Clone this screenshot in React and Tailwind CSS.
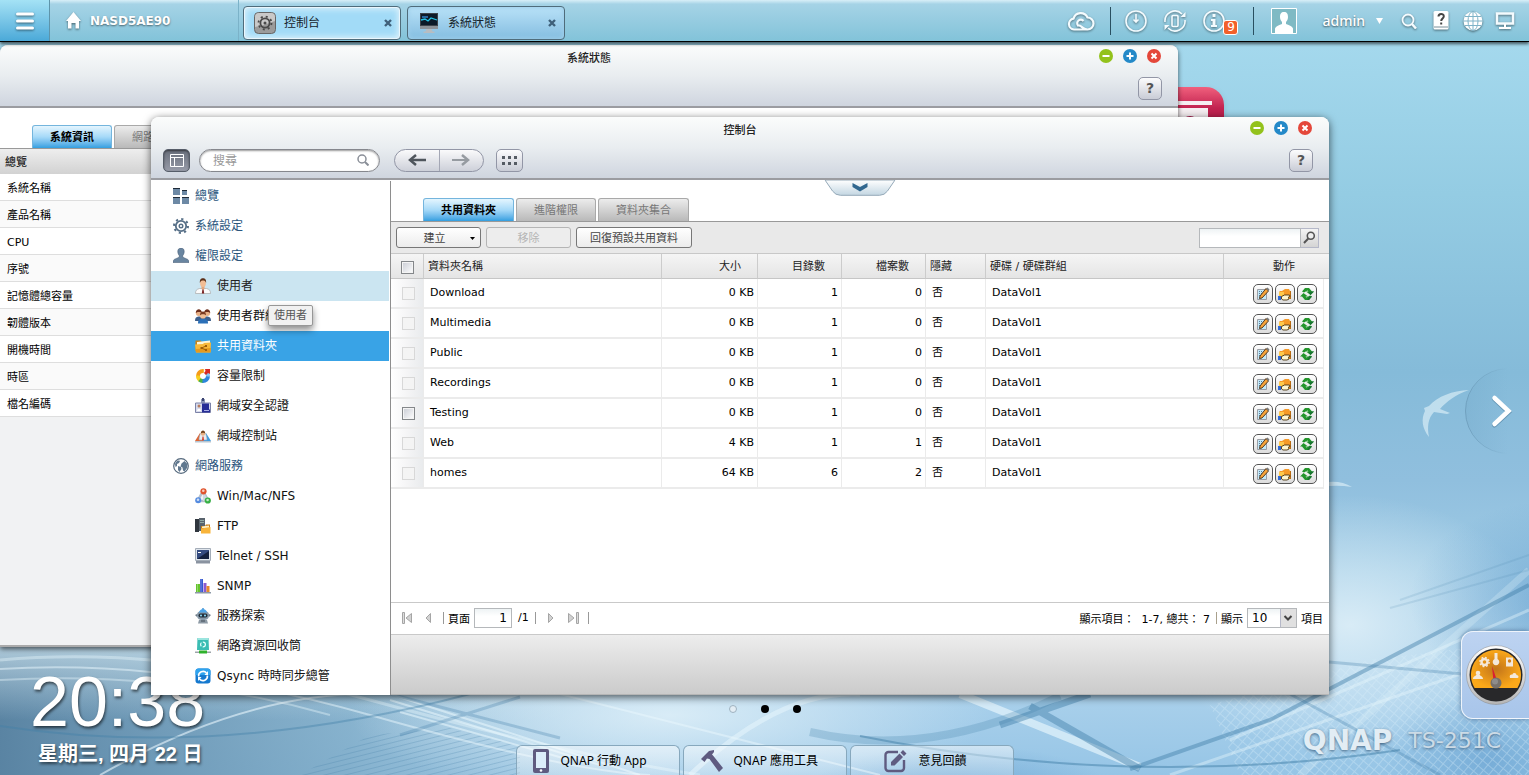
import React from "react";

const TOP_TABS = [
  { label: "控制台", icon: "gear", active: true },
  { label: "系統狀態", icon: "monitor", active: false },
];

const STATUS_ROWS = ["系統名稱", "產品名稱", "CPU", "序號", "記憶體總容量", "韌體版本", "開機時間", "時區", "檔名編碼"];

const NAV = [
  { label: "總覽", icon: "overview", group: true },
  { label: "系統設定", icon: "cog", group: true },
  { label: "權限設定", icon: "person", group: true },
  { label: "使用者", icon: "user", state: "hover" },
  { label: "使用者群組", icon: "users" },
  { label: "共用資料夾", icon: "folder", state: "active" },
  { label: "容量限制", icon: "quota" },
  { label: "網域安全認證", icon: "badge" },
  { label: "網域控制站", icon: "domain" },
  { label: "網路服務", icon: "globe", group: true },
  { label: "Win/Mac/NFS", icon: "share" },
  { label: "FTP", icon: "ftp" },
  { label: "Telnet / SSH", icon: "terminal" },
  { label: "SNMP", icon: "bars" },
  { label: "服務探索", icon: "robot" },
  { label: "網路資源回收筒", icon: "recycle" },
  { label: "Qsync 時時同步總管", icon: "sync" },
];

const FOLDERS = [
  ["Download", "0 KB", 1, 0],
  ["Multimedia", "0 KB", 1, 0],
  ["Public", "0 KB", 1, 0],
  ["Recordings", "0 KB", 1, 0],
  ["Testing", "0 KB", 1, 0],
  ["Web", "4 KB", 1, 1],
  ["homes", "64 KB", 6, 2],
];

const NAV_DRAWINGS = {
  overview: (
    <g fill="#6d89a5">
      <path d="M0 0h7v7H0zM9 2h5v5H9zM0 9h7v7H0zM9 9h7v7H9z" />
      <path fill="#1e2a38" d="M0 0h7v1H0zM9 2h5v1H9zM0 9h7v1H0zM9 9h7v1H9z" />
    </g>
  ),
  cog: (
    <g fill="none" stroke="#566f87">
      <circle cx="8" cy="8" r="5.2" strokeWidth="1.8" />
      <circle cx="8" cy="8" r="1.800" strokeWidth="1.400" />
      <circle cx="8" cy="8" r="7" strokeWidth="2" strokeDasharray="2.2 3.3" />
    </g>
  ),
  person: (
    <path d="M8 0c2.400 0 3.400 1.800 3.200 4-.1 1.600-.7 2.700-1.400 3.500v1.700l4.500 2c1.200.5 1.700 1.500 1.700 3.300H0c0-1.800.5-2.800 1.700-3.300l4.500-2V7.500C5.500 6.700 4.900 5.600 4.800 4 4.600 1.800 5.600 0 8 0z" fill="#6985a0" stroke="#3c536c" strokeWidth=".5" />
  ),
  user: (
    <g>
      <path d="M.5 15.500c0-3 1-4.200 4-5h7c3 .8 4 2 4 5z" fill="#fbfbfb" stroke="#a9a9a9" strokeWidth=".7" />
      <path d="M6.500 8h3v3L8 12l-1.500-1z" fill="#e5a67a" />
      <ellipse cx="8" cy="5" rx="2.900" ry="4" fill="#f2bd94" />
      <path d="M4.900 5C4.600 1.500 6 .3 8 .3S11.400 1.500 11.100 5C10.500 3 9.500 2.600 8 2.600S5.500 3 4.900 5z" fill="#5b2f17" />
      <path d="M7.400 11.500h1.200l.6 4H6.800z" fill="#7a2424" />
    </g>
  ),
  users: (
    <g>
      <path d="M0 13c0-3 1-4 3.500-4.500h9C15 9 16 10 16 13z" fill="#3d5f8c" />
      <circle cx="3.800" cy="5" r="3" fill="#e8b086" />
      <circle cx="12.200" cy="5" r="3" fill="#e8b086" />
      <path d="M.8 5c0-5 6-5 6 0-1-1.500-5-1.500-6 0zM9.200 5c0-5 6-5 6 0-1-1.500-5-1.500-6 0z" fill="#6d2f1c" />
      <path d="M3 15.500c0-3.500 1-4.500 5-4.500s5 1 5 4.500z" fill="#2b70b8" />
      <circle cx="8" cy="7.500" r="3.100" fill="#f0be95" />
      <path d="M4.900 7.500c0-5.200 6.200-5.200 6.200 0-1-1.700-5.200-1.700-6.200 0z" fill="#7b3a20" />
    </g>
  ),
  folder: (
    <g>
      <path d="M.5 4V2.500h5L7 4h8v9H.5z" fill="#c98415" />
      <path d="M2 4l13-1.500v4L2 8z" fill="#fff6d8" />
      <path d="M0 6.500l8-.5 1-1 7-.5-.5 10H1z" fill="#f8b93a" />
      <path d="M1 14.500L.6 11 16 10l-.5 4.500z" fill="#e69a1e" />
      <path d="M11 8l-4.500 2 4.500 2" stroke="#a05e08" fill="none" />
      <path d="M10 7h2v2h-2zM5.500 9h2v2h-2zM10 11h2v2h-2z" fill="#a05e08" />
    </g>
  ),
  quota: (
    <g fill="none" strokeWidth="4">
      <path d="M8 3a5 5 0 0 0-5 5" stroke="#f59b1a" />
      <path d="M3 7.500A5 5 0 0 0 5 12" stroke="#f7cf20" />
      <path d="M4.500 11.800A5 5 0 0 0 8 13" stroke="#49b244" />
      <path d="M7.500 13A5 5 0 0 0 13 8" stroke="#2d86dc" />
      <path d="M13 8.500A5 5 0 0 0 11 4" stroke="#88c7f3" />
      <path d="M8 3l1 .1" stroke="#f4b22f" />
      <path d="M10 1h5v5l-2-1-2 2-2-2 1.500-2z" fill="#d72a25" stroke="none" />
    </g>
  ),
  badge: (
    <g>
      <path d="M6 1h4v5H6z" fill="#8c95b8" />
      <path d="M7 0h2v3H7z" fill="#3b4470" />
      <path d="M.5 5h15v9.500H.5z" fill="#d6daec" stroke="#7c83a8" />
      <path d="M7 5.500h7v6h1v3H7z" fill="#272d96" />
      <circle cx="4" cy="8" r="1.500" fill="#b67c5d" />
      <path d="M2 13c0-3 4-3 4 0z" fill="#fff" />
      <path d="M9 12h5v1H9z" fill="#a9aee8" />
    </g>
  ),
  domain: (
    <g>
      <path d="M0 13l5-8 3 8z" fill="#df6533" />
      <path d="M8 13l3-8 5 8z" fill="#3d9be0" />
      <path d="M4 12c0-4 1.500-8 4-8s4 4 4 8z" fill="#e7ecf1" stroke="#8fa4b8" strokeWidth=".6" />
      <circle cx="8" cy="5.500" r="2.200" fill="#e9b184" />
      <path d="M5.800 5.500c0-4 4.400-4 4.400 0-1-1-3.400-1-4.400 0z" fill="#70421c" />
      <path d="M7.500 8.500h1l.5 4H7z" fill="#d33a23" />
      <path d="M0 13h16v1.500H0z" fill="#b7c5d1" />
    </g>
  ),
  globe: (
    <g>
      <circle cx="8" cy="8" r="7.300" fill="#fff" stroke="#55697d" strokeWidth="1.200" />
      <path d="M3 4c2-2 4-1.500 4-1l-1 2-2 1v2L2.500 9 2 6zM8.500 5.500l3-2.500 3 3-.5 4-2.500 3.500-1.500-1-.5-3-2-1zM5 8l3 1 .5 2-2 3-1.500-2z" fill="#60788f" />
    </g>
  ),
  share: (
    <g>
      <path d="M8 3L2.500 13h11z" fill="#eef2f5" stroke="#b5c0cc" strokeWidth="2.500" />
      <path d="M8 3l5.500 10H8z" fill="#cfd8e0" />
      <circle cx="8.500" cy="3.300" r="3.100" fill="#e0532c" />
      <circle cx="3.200" cy="12.300" r="3" fill="#548be0" />
      <circle cx="12.800" cy="12.500" r="3.100" fill="#37b045" />
      <circle cx="8.300" cy="2.800" r="1.300" fill="#fff" fillOpacity=".7" />
      <circle cx="3" cy="11.800" r="1.300" fill="#fff" fillOpacity=".7" />
      <circle cx="12.600" cy="12" r="1.300" fill="#fff" fillOpacity=".7" />
    </g>
  ),
  ftp: (
    <g>
      <path d="M0 1h4v13H0z" fill="#30363e" />
      <path d="M4 0h6v13H4z" fill="#59636d" />
      <path d="M5 2h4v1H5zM5 4h4v1H5z" fill="#8fa8a0" />
      <path d="M6 8h4l1-1.500h4V15H6z" fill="#cb7f15" />
      <path d="M7 8.500l7-1V10H7z" fill="#fff0c4" />
      <path d="M6 10.500L15.500 9v6.500H6z" fill="#f8b43a" />
    </g>
  ),
  terminal: (
    <g>
      <path d="M.5.5h15v12H.5z" fill="#dfe5ec" stroke="#a4adb8" />
      <path d="M2 2h12v9H2z" fill="#14213f" />
      <path d="M2 11l12-8v-1H2z" fill="#344b80" />
      <path d="M3 4h3v1H3z" fill="#fff" />
      <path d="M1 13h14v2.500H1z" fill="#8a93a0" />
    </g>
  ),
  bars: (
    <g>
      <path d="M1 6h4v8H1z" fill="#65c52c" />
      <path d="M5 1h3v13H5z" fill="#3557d1" />
      <path d="M8.500 5h3v9h-3z" fill="#8b5bcf" />
      <path d="M11.500 8h3v6h-3z" fill="#e68a2a" />
      <path d="M0 14h16v1.500H0z" fill="#8d99a6" />
      <path d="M2 6h1v8H2zM5.500 1h1v13h-1z" fill="#fff" fillOpacity=".3" />
    </g>
  ),
  robot: (
    <g>
      <path d="M7.300 0h1.400v3H7.300z" fill="#3a8ed2" />
      <path d="M2 7c0-6 12-6 12 0 0 4-2 5-6 5S2 11 2 7z" fill="#8798a7" />
      <path d="M4 4.500c.5-2 2-3.500 4-3.500s3.500 1.500 4 3.500z" fill="#4ca4e7" />
      <rect x="3.500" y="5.500" width="9" height="4" rx="2" fill="#22303d" />
      <circle cx="6" cy="7.500" r="1" fill="#8de0ff" />
      <circle cx="10" cy="7.500" r="1" fill="#8de0ff" />
      <path d="M0 7l2-1v3zM16 7l-2-1v3z" fill="#6a7986" />
      <path d="M4 12h8l1 3.500H3z" fill="#8d9aa5" />
      <path d="M6 12.500h4v1H6z" fill="#3f4b56" />
    </g>
  ),
  recycle: (
    <g>
      <path d="M2.500 0h11l.5 12H2z" fill="#3bbdb3" />
      <path d="M3 0h10v2H3z" fill="#9be5df" />
      <circle cx="8" cy="6.500" r="2.400" fill="none" stroke="#e9fffc" strokeWidth="1.200" strokeDasharray="3.700 1.300" />
      <path d="M0 13.500h16v1.500H0z" fill="#9da5aa" />
      <path d="M4 12.500h8v3H4z" fill="#2fb12c" />
    </g>
  ),
  sync: (
    <g>
      <rect x=".5" y=".5" width="15" height="15" rx="3" fill="#1579cf" />
      <path d="M.5 3.500a3 3 0 0 1 3-3h9a3 3 0 0 1 3 3V7H.5z" fill="#2fa3ee" />
      <path d="M3.600 8.500A4.500 4.500 0 0 1 11.500 5M12.400 7.500A4.500 4.500 0 0 1 4.500 11" fill="none" stroke="#fff" strokeWidth="1.600" />
      <path d="M13 3v4H9.500zM3 13V9h3.500z" fill="#fff" />
    </g>
  ),
};

function NavIcon({ name }) {
  return (
    <svg aria-hidden="true" className="h-4 w-4 shrink-0" viewBox="0 0 16 16">
      {NAV_DRAWINGS[name]}
    </svg>
  );
}

function Wallpaper() {
  return (
    <svg aria-hidden="true" className="absolute inset-0 h-full w-full" viewBox="0 0 1529 775" preserveAspectRatio="none">
      <defs>
        <linearGradient id="sky" x1="0" y1="0" x2="0" y2="1">
          <stop offset="0" stopColor="#a9dcf0" />
          <stop offset=".25" stopColor="#94cce3" />
          <stop offset=".48" stopColor="#85bbd9" />
          <stop offset=".62" stopColor="#90bfde" />
          <stop offset=".74" stopColor="#9fcbe5" />
          <stop offset=".9" stopColor="#a9d0eb" />
          <stop offset="1" stopColor="#96c5e6" />
        </linearGradient>
        <linearGradient id="leftShade" x1="0" y1="0" x2="1" y2="0">
          <stop offset="0" stopColor="#56809f" stopOpacity=".95" />
          <stop offset=".5" stopColor="#7ba7c2" stopOpacity=".7" />
          <stop offset="1" stopColor="#c0dcec" stopOpacity="0" />
        </linearGradient>
        <linearGradient id="leftLight" x1="0" y1="0" x2="0" y2="1">
          <stop offset="0" stopColor="#c6dde9" stopOpacity=".95" />
          <stop offset="1" stopColor="#c6dde9" stopOpacity="0" />
        </linearGradient>
        <radialGradient id="glow">
          <stop offset="0" stopColor="#deeff8" stopOpacity=".9" />
          <stop offset="1" stopColor="#deeff8" stopOpacity="0" />
        </radialGradient>
        <radialGradient id="deep">
          <stop offset="0" stopColor="#5593c8" stopOpacity=".5" />
          <stop offset="1" stopColor="#5593c8" stopOpacity="0" />
        </radialGradient>
        <pattern id="mesh" width="7" height="7" patternUnits="userSpaceOnUse" patternTransform="rotate(40)">
          <path d="M0 0H7M0 0V7" stroke="#dcf0fa" strokeWidth="2" />
        </pattern>
        <pattern id="fine" width="5" height="5" patternUnits="userSpaceOnUse" patternTransform="rotate(-14)">
          <path d="M0 0H5" stroke="#417ca5" strokeWidth="2" />
        </pattern>
      </defs>
      <rect width="1529" height="775" fill="url(#sky)" />
      <rect y="630" width="700" height="145" fill="url(#leftShade)" />
      <rect y="630" width="560" height="90" fill="url(#leftLight)" />
      <ellipse cx="670" cy="715" rx="320" ry="85" fill="url(#glow)" />
      <ellipse cx="1350" cy="625" rx="190" ry="130" fill="url(#glow)" />
      <ellipse cx="1560" cy="600" rx="150" ry="100" fill="url(#deep)" />
      <ellipse cx="960" cy="790" rx="150" ry="45" fill="url(#deep)" />
      <ellipse cx="1490" cy="760" rx="110" ry="70" fill="url(#deep)" />
      <path d="M300 775L370 735 450 728 520 746 520 775z" fill="url(#fine)" opacity=".25" />
      <path d="M1210 705L1370 660 1529 640V775H1240z" fill="url(#mesh)" opacity=".33" />
      <g fill="none" stroke="#e9f7fd">
        <path d="M0 660Q170 645 370 700T700 775" strokeWidth="3" opacity=".4" />
        <path d="M0 669Q170 658 370 715T650 775" strokeWidth="2" opacity=".5" />
        <path d="M0 680Q170 670 330 715" strokeWidth="2" opacity=".4" />
        <path d="M100 775Q250 690 380 694" strokeWidth="2" opacity=".6" />
        <path d="M390 694L640 775M390 700L600 765M400 712L570 760" strokeWidth="2" opacity=".55" />
        <path d="M560 694L880 775" strokeWidth="2" opacity=".5" />
        <path d="M690 775Q780 690 860 694" strokeWidth="5" opacity=".5" />
        <path d="M960 694L1140 767" strokeWidth="8" opacity=".65" />
        <path d="M1170 775L1529 650M1130 694L1240 620M1529 610L1230 740" strokeWidth="3" opacity=".4" />
        <path d="M1300 775L1529 570" strokeWidth="7" opacity=".25" />
      </g>
      <g fill="none" stroke="#417fa8">
        <path d="M0 726Q220 760 470 694" strokeWidth="2" opacity=".4" />
        <path d="M390 694L560 738M400 735L520 697" strokeWidth="3" opacity=".3" />
        <path d="M810 732Q930 760 1060 696" strokeWidth="8" opacity=".25" />
        <path d="M1000 725L1090 694M1030 706L1140 769" strokeWidth="7" opacity=".45" />
        <path d="M860 736Q1130 790 1400 750" strokeWidth="2" opacity=".5" />
        <path d="M1130 769L1270 720 1529 585" strokeWidth="4" opacity=".45" />
        <path d="M1290 694L1440 775M1329 662L1529 680" strokeWidth="3" opacity=".3" />
        <path d="M1400 600L1529 555M1390 608L1529 570" strokeWidth="2" opacity=".15" />
      </g>
      <g fill="#e5f5fb" opacity=".6">
        <path d="M1469 390C1452 391 1438 396 1429 406L1424 408 1425 411C1421 419 1422 428 1429 437C1427 427 1428 418 1434 412L1447 414 1450 413 1440 409C1446 402 1456 394 1469 390z" />
        <path d="M1329 482Q1342 481 1352 487Q1340 485 1329 486z" />
      </g>
    </svg>
  );
}

function WindowControls() {
  return (
    <div className="flex items-start justify-end gap-2.5 pt-1 pr-[17px]">
      {[
        ["最小化", "#93c21c", "M3.500 7h7"],
        ["最大化", "#2489c8", "M3.500 7h7M7 3.500v7"],
        ["關閉", "#e4473a", "M4.500 4.500l5 5M9.500 4.500l-5 5"],
      ].map(([label, color, d]) => (
        <button key={label} type="button" aria-label={label}>
          <svg className="h-3.5 w-3.5" viewBox="0 0 14 14">
            <circle cx="7" cy="7" r="7" fill={color} />
            <path d={d} stroke="#fff" strokeWidth="2" />
          </svg>
        </button>
      ))}
    </div>
  );
}

function WindowHeader({ title, children }) {
  return (
    <header className="flex h-[63px] shrink-0 flex-col rounded-t-lg border-b-2 border-[#9b9ca1] bg-linear-to-b from-[#fbfcfc] via-[#e9edf0] to-[#cfd5df]">
      <div className="grid h-6 shrink-0 grid-cols-[1fr_auto_1fr]">
        <span />
        <h2 className="pt-0.5 text-[11px] leading-6 font-medium text-[#222]">{title}</h2>
        <WindowControls />
      </div>
      <div className="flex h-[38px] shrink-0 items-center pr-4 pl-3">
        {children}
        <button type="button" aria-label="說明" className="ml-auto h-[23px] w-6 rounded-[5px] border border-[#9296a6] bg-linear-to-b from-[#fcfcfd] to-[#c9ccd6] text-[14px] leading-5 font-bold text-[#555]">?</button>
      </div>
    </header>
  );
}

function Tab({ active, children }) {
  return (
    <button
      type="button"
      className={
        active
          ? "h-[23px] rounded-t-[3px] border border-b-0 border-[#74b5dd] bg-linear-to-b from-[#e4f5fe] via-[#a5d9f8] to-[#319fe0] px-[17px] pt-0.5 text-[11px] font-bold text-black"
          : "h-[23px] rounded-t-[3px] border border-b-0 border-[#a9a9a9] bg-linear-to-b from-[#ececec] to-[#b9b9b9] px-[17px] pt-0.5 text-[11px] text-[#777]"
      }
    >
      {children}
    </button>
  );
}

function StatusWindow() {
  return (
    <section className="absolute top-[45px] right-[351px] bottom-[128px] left-0 flex flex-col rounded-t-lg border-b-2 border-[#aaa] bg-[#f1f2f3] shadow-[0_2px_5px_rgba(0,0,0,0.6)]">
      <WindowHeader title="系統狀態" />
      <div className="flex h-[41px] shrink-0 items-end gap-0.5 border-b border-[#999] bg-white pl-8">
        <Tab active>系統資訊</Tab>
        <Tab>網路狀態</Tab>
      </div>
      <h3 className="h-[25px] shrink-0 bg-linear-to-b from-[#eee] to-[#d2d2d2] pt-0.5 pl-[5px] text-[11px] leading-6 font-medium text-[#222]">總覽</h3>
      <ul>
        {STATUS_ROWS.map((row, i) => (
          <li key={row} className={`h-[27px] border-b border-[#dedede] pt-0.5 pl-[7px] text-[11px] leading-[26px] text-black ${i % 2 ? "bg-[#fafafa]" : "bg-white"}`}>
            {row}
          </li>
        ))}
      </ul>
    </section>
  );
}

function ControlToolbar() {
  return (
    <>
      <button type="button" aria-label="側邊欄" className="flex h-[23px] w-[27px] items-center justify-center rounded-[5px] border border-[#565d69] bg-linear-to-b from-[#696f7b] to-[#979ba8] shadow-[inset_0_1px_2px_rgba(0,0,0,0.5)]">
        <svg className="h-[13px] w-3.5" viewBox="0 0 14 13">
          <path d="M.5.5h13v12H.5zM0 3.500h14M4.500 3v10" fill="none" stroke="#fff" />
        </svg>
      </button>
      <label className="ml-[9px] flex h-[23px] w-[181px] items-center rounded-full border border-[#85878d] bg-white pr-2.5 pl-[13px] shadow-[inset_0_1px_2px_rgba(0,0,0,0.4)]">
        <input type="text" aria-label="搜尋" placeholder="搜尋" className="min-w-0 flex-1 bg-transparent pt-0.5 text-[12px] text-black outline-none placeholder:text-[#999]" />
        <svg aria-hidden="true" className="h-3 w-3" viewBox="0 0 12 12">
          <circle cx="5" cy="5" r="4" fill="none" stroke="#8a8f98" strokeWidth="1.500" />
          <path d="M8 8l3.500 3.500" stroke="#8a8f98" strokeWidth="2" />
        </svg>
      </label>
      <div className="ml-3.5 flex h-[23px] w-[90px] rounded-full border border-[#9296a6] bg-linear-to-b from-[#fafafb] to-[#cdd0d9]">
        <button type="button" aria-label="上一頁" className="flex flex-1 items-center justify-center border-r border-[#a4a7b5]">
          <svg className="h-3 w-[18px]" viewBox="0 0 18 12"><path d="M18 6H3" stroke="#4f555c" strokeWidth="2.500" /><path d="M8 1L2 6l6 5" fill="none" stroke="#4f555c" strokeWidth="2.500" /></svg>
        </button>
        <button type="button" aria-label="下一頁" className="flex flex-1 items-center justify-center">
          <svg className="h-3 w-[18px]" viewBox="0 0 18 12"><path d="M0 6h15" stroke="#969ba1" strokeWidth="2" /><path d="M10 1l6 5-6 5" fill="none" stroke="#969ba1" strokeWidth="2.500" /></svg>
        </button>
      </div>
      <button type="button" aria-label="所有項目" className="ml-3 flex h-[23px] w-[27px] items-center justify-center rounded-[5px] border border-[#9296a6] bg-linear-to-b from-[#fcfcfd] to-[#c9ccd6]">
        <svg className="h-[9px] w-[15px]" viewBox="0 0 15 9"><path d="M0 0h3v3H0zM6 0h3v3H6zM12 0h3v3h-3zM0 6h3v3H0zM6 6h3v3H6zM12 6h3v3h-3z" fill="#555b63" /></svg>
      </button>
    </>
  );
}

function Sidebar() {
  return (
    <nav className="relative w-60 shrink-0 border-r border-[#8e8e8e] bg-white pr-px">
      {NAV.map((item) => (
        <a
          key={item.label}
          href="#"
          className={`flex h-[30px] items-center gap-1.5 text-[12px] whitespace-nowrap ${item.group ? "pl-[22px] text-[#2a557c]" : "pl-11"} ${
            item.state === "active" ? "bg-[#39a3e6] text-white" : item.state === "hover" ? "bg-[#cbe5f1] text-[#222]" : item.group ? "" : "text-[#111]"
          }`}
        >
          <NavIcon name={item.icon} />
          {item.label}
        </a>
      ))}
      <span role="tooltip" className="absolute top-[124px] left-[117px] rounded-xs border border-[#979797] bg-[#f1f1f1] px-[5px] pt-px text-[11px] leading-[18px] text-[#555] shadow-[0_4px_7px_rgba(0,0,0,0.45)]">
        使用者
      </span>
    </nav>
  );
}

const CHECK = "block h-[13px] w-[13px] appearance-none border border-[#84878a] bg-linear-to-br from-[#c9ccd4] to-white shadow-[inset_0_0_0_1px_#f4f4f4] disabled:border-[#d8d8d8] disabled:from-[#f4f4f4] disabled:to-[#f4f4f4]";

const ACTION_BTN = "flex h-5 w-5 items-center justify-center rounded-[5px] border border-[#555] bg-linear-to-b from-white to-[#dcdcdc]";

function FolderActions({ name }) {
  return (
    <div className="flex justify-end gap-0.5 pr-1.5">
      <button type="button" aria-label={`編輯 ${name}`} className={ACTION_BTN}>
        <svg className="h-3.5 w-3.5" viewBox="0 0 14 14">
          <path d="M1.500 2.500h9v10h-9z" fill="#c4e9f8" stroke="#9b9fa6" />
          <path d="M3 4.500h4M3 6.500h3M3 8.500h2" stroke="#5b7f9d" strokeDasharray="1 1" />
          <path d="M10 1.500L12.500 4 6 11 3.500 11.500 4 9z" fill="#f7a43a" stroke="#3f2a16" strokeWidth=".9" />
          <path d="M10 1.500l1.500-1 2 2-1 1.500z" fill="#777" />
        </svg>
      </button>
      <button type="button" aria-label={`權限 ${name}`} className={ACTION_BTN}>
        <svg className="h-3.5 w-3.5" viewBox="0 0 14 14">
          <path d="M1 5l1-1h2l3-2h4l1 2h1v8H1z" fill="#f79a28" />
          <path d="M1 5h5v3l-2 1H1z" fill="#ffc94b" />
          <path d="M12.500 4v8" fill="none" stroke="#b96d16" />
          <path d="M3.500 9.500l3-1.500h5l.5 1.500-1.500.5.5 2-2 1H5l-1.500-1z" fill="#fff5cf" stroke="#4b3612" strokeWidth=".9" />
          <path d="M0 9h3v4H0z" fill="#3169d4" />
        </svg>
      </button>
      <button type="button" aria-label={`重新整理 ${name}`} className={ACTION_BTN}>
        <svg className="h-3.5 w-3.5" viewBox="0 0 14 14">
          <path d="M2 4.500L5 1h4l3 3.500h2L10.500 8 6 4.500h2.500L7.500 3.500 4 5.500z" fill="#23952c" />
          <path d="M12 9.500L9 13H5L2 9.500H0L3.500 6 8 9.500H5.500l1 1L10 8.500z" fill="#23952c" />
          <path d="M12 4.500h2L10.500 8 8 5zM12 9.500L9 13H7l2.500-4z" fill="#1a7432" />
        </svg>
      </button>
    </div>
  );
}

const TH = "border-r border-[#ccc] font-normal text-[#222] ";
const TD = "border-r border-[#ebebeb] text-black ";

function FolderTable() {
  return (
    <table className="w-full table-fixed border-separate border-spacing-0 text-[11px]">
      <colgroup>
        <col className="w-[33px]" />
        <col />
        <col className="w-24" />
        <col className="w-[84px]" />
        <col className="w-[84px]" />
        <col className="w-[60px]" />
        <col className="w-[238px]" />
        <col className="w-[100px]" />
        <col className="w-[5px]" />
      </colgroup>
      <thead>
        <tr className="h-[25px] bg-linear-to-b from-[#f5f5f5] to-[#e4e4e4] [&>th]:border-b [&>th]:border-b-[#c6c6c6] [&>th]:pt-[3px]">
          <th className={TH + "pl-2.5"}><input type="checkbox" aria-label="全選" className={CHECK} /></th>
          <th className={TH + "pl-1 text-left"}>資料夾名稱</th>
          <th className={TH + "pr-4 text-right"}>大小</th>
          <th className={TH + "pr-4 text-right"}>目錄數</th>
          <th className={TH + "pr-4 text-right"}>檔案數</th>
          <th className={TH + "pl-1 text-left"}>隱藏</th>
          <th className={TH + "pl-1 text-left"}>硬碟 / 硬碟群組</th>
          <th className="pl-5 font-normal text-[#222]">動作</th>
          <th><span className="sr-only" /></th>
        </tr>
      </thead>
      <tbody>
        {FOLDERS.map(([name, size, dirs, files]) => (
          <tr key={name} className="h-[30px] [&>td]:border-b-2 [&>td]:border-b-[#ebebeb] [&>td]:pt-px [&>td:last-child]:border-b-0">
            <td className={TD + "bg-linear-to-r from-white via-[#f5f5f6] to-[#e9ebed] pl-[11px]"}>
              <input type="checkbox" aria-label={name} disabled={name !== "Testing"} className={CHECK} />
            </td>
            <td className={TD + "pl-1.5"}>{name}</td>
            <td className={TD + "pr-[3px] text-right"}>{size}</td>
            <td className={TD + "pr-[3px] text-right"}>{dirs}</td>
            <td className={TD + "pr-[3px] text-right"}>{files}</td>
            <td className={TD + "pl-1.5"}>否</td>
            <td className={TD + "pl-1.5"}>DataVol1</td>
            <td className={TD}><FolderActions name={name} /></td>
            <td />
          </tr>
        ))}
      </tbody>
    </table>
  );
}

function PageArrow({ label, d, bar }) {
  return (
    <button type="button" aria-label={label}>
      <svg className="h-3 w-3" viewBox="0 0 12 12">
        <path d={d} fill="#d2d2d2" stroke="#a5a5a5" />
        {bar && <path d={bar} fill="#ddd" stroke="#a5a5a5" />}
      </svg>
    </button>
  );
}

function Pager() {
  return (
    <div className="flex h-[33px] shrink-0 items-center border-y border-[#c9c9c9] pr-1.5 pb-px pl-2.5 text-[11px] text-black">
      <PageArrow label="第一頁" d="M10.500 1.500v9L5 6z" bar="M1.500.5h2v11h-2z" />
      <span className="w-2.5" />
      <PageArrow label="上一頁" d="M7.500 1.500v9L3 6z" />
      <span className="mr-1 ml-2 h-3 w-px bg-[#999]" />
      <label className="flex items-center gap-1">
        <span className="pt-1">頁面</span>
        <input type="text" defaultValue="1" className="h-5 w-[38px] border border-[#b5b8bb] bg-linear-to-b from-[#eef3f4] to-white to-40% pr-1 text-right text-[12px] outline-none" />
      </label>
      <span className="ml-1.5">/1</span>
      <span className="mr-2 ml-1.5 h-3 w-px bg-[#999]" />
      <PageArrow label="下一頁" d="M4.500 1.500v9L9 6z" />
      <span className="w-3" />
      <PageArrow label="最後一頁" d="M.5 1.500v9L6 6z" bar="M8.500.5h2v11h-2z" />
      <span className="ml-2 h-3 w-px bg-[#999]" />
      <span className="ml-auto pt-1 whitespace-pre">顯示項目：{"  "}1-7, 總共： 7</span>
      <span className="mx-1 ml-1.5 h-3 w-px bg-[#a9a08c]" />
      <label htmlFor="page-size" className="pt-1">顯示</label>
      <span className="relative mx-1 h-5 w-[50px]">
        <select id="page-size" defaultValue="10" className="block h-5 w-full appearance-none border border-[#b5b8bb] bg-linear-to-b from-[#eef3f4] to-white to-40% pl-1 text-[12px] outline-none">
          <option>10</option>
          <option>20</option>
          <option>50</option>
        </select>
        <svg aria-hidden="true" className="pointer-events-none absolute top-px right-px h-[18px] w-4" viewBox="0 0 16 18">
          <path d="M0 0h16v18H0z" fill="#e0e0e0" />
          <path d="M.5 0v18" stroke="#b5b8c8" />
          <path d="M4.500 7L8 10.500 11.500 7" fill="none" stroke="#444" strokeWidth="2" />
        </svg>
      </span>
      <span className="pt-1">項目</span>
    </div>
  );
}

const BTN = "flex h-[21px] items-center justify-center rounded-[3px] border pt-[3px] text-[11px] ";

function ControlPanelWindow() {
  return (
    <section className="absolute top-[117px] right-[200px] bottom-[80px] left-[151px] flex flex-col rounded-t-lg bg-white shadow-[0_2px_9px_rgba(0,0,0,0.65)]">
      <WindowHeader title="控制台"><ControlToolbar /></WindowHeader>
      <div className="flex min-h-0 flex-1 pt-px">
        <Sidebar />
        <main className="flex min-w-0 flex-1 flex-col border-b border-[#b5b5b5]">
          <div className="relative -mt-px flex h-[42px] shrink-0 items-end gap-0.5 border-b border-[#999] pl-8">
            <Tab active>共用資料夾</Tab>
            <Tab>進階權限</Tab>
            <Tab>資料夾集合</Tab>
            <button type="button" aria-label="展開" className="absolute top-0 left-1/2 -translate-x-1/2">
              <svg className="h-4 w-[71px]" viewBox="0 0 71 16">
                <defs>
                  <linearGradient id="handle" x1="0" y1="0" x2="0" y2="1">
                    <stop offset="0" stopColor="#fff" /><stop offset="1" stopColor="#c3d6e2" />
                  </linearGradient>
                </defs>
                <path d="M.5 0L8 11Q11 15.300 16 15.300H55Q60 15.300 63 11L70.500 0z" fill="url(#handle)" stroke="#95a9b8" />
                <path d="M28 3l7.500 4L43 3v4l-7.500 4.500L28 7z" fill="#31678f" />
              </svg>
            </button>
          </div>
          <div className="flex h-8 shrink-0 items-center gap-[5px] border-b border-[#c8c8c8] bg-[#e9e9e9] pr-2.5 pl-[5px]">
            <button type="button" className={BTN + "relative w-[85px] border-[#777] bg-linear-to-b from-white to-[#ececec] pr-2 text-[#444]"}>
              建立
              <svg aria-hidden="true" className="absolute top-[9px] right-[5px] h-[3px] w-[5px]" viewBox="0 0 5 3"><path d="M0 0h5L2.500 3z" fill="#000" /></svg>
            </button>
            <button type="button" disabled className={BTN + "w-[85px] border-[#b5b5b5] bg-[#ededed] text-[#b5b5b5]"}>移除</button>
            <button type="button" className={BTN + "w-[116px] border-[#777] bg-linear-to-b from-white to-[#ececec] text-[#444]"}>回復預設共用資料</button>
            <div className="ml-auto flex h-5">
              <input type="text" aria-label="搜尋資料夾" className="w-[102px] border border-[#b5b8bb] bg-linear-to-b from-[#eef3f4] to-white to-40% px-1 text-[11px] outline-none" />
              <button type="button" aria-label="搜尋" className="flex w-[18px] items-center justify-center border border-l-0 border-[#b5b8c8] bg-linear-to-b from-[#f4f4f4] to-[#d4d4d4]">
                <svg className="h-[13px] w-[13px]" viewBox="0 0 13 13">
                  <circle cx="7.800" cy="4.800" r="3.500" fill="#eee" stroke="#555" strokeWidth="1.600" />
                  <path d="M5.300 7.500L1 12" stroke="#555" strokeWidth="2" />
                </svg>
              </button>
            </div>
          </div>
          <div className="min-h-0 flex-1 overflow-hidden"><FolderTable /></div>
          <Pager />
          <div className="h-[59px] shrink-0 bg-linear-to-b from-[#ededed] to-[#cbcbcb]" />
        </main>
      </div>
    </section>
  );
}

function TopIcon({ label, wide, children }) {
  return (
    <button type="button" aria-label={label} className={`shrink-0 drop-shadow-[0_1px_1px_rgba(0,0,0,0.45)] ${wide}`}>
      {children}
    </button>
  );
}

const LINE = { fill: "none", stroke: "#f4fbfe", strokeWidth: 1.6 };

function TopBar() {
  return (
    <header className="absolute inset-x-0 top-0 z-10 flex h-[42px] items-stretch border-b border-black bg-linear-to-b from-[#d8eff8] via-[#a5d3e6] via-10% to-[#82c3d9] shadow-[0_2px_3px_rgba(0,0,0,0.6)]">
      <button type="button" aria-label="主選單" className="flex w-[50px] items-center justify-center border-r border-[#5e94aa] bg-linear-to-b from-[#a4e2f5] to-[#4aa9d8]">
        <svg className="h-[18px] w-[18px] drop-shadow-[0_1px_1px_rgba(0,0,0,0.5)]" viewBox="0 0 18 18">
          <path d="M1.500 2h15M1.500 9h15M1.500 16h15" stroke="#fff" strokeWidth="3" strokeLinecap="round" />
        </svg>
      </button>
      <a href="#" className="flex w-[189px] items-center gap-2 border-r border-[#7bb2c8] pl-[15px] text-[12px] font-bold text-white [text-shadow:0_1px_2px_rgba(0,0,0,0.5)]">
        <svg aria-hidden="true" className="h-[17px] w-[17px] drop-shadow-[0_1px_1px_rgba(0,0,0,0.5)]" viewBox="0 0 17 17">
          <path d="M8.500 0L1 9h2v7.500h3.500V11h4v5.500H14V9h2z" fill="#fff" />
        </svg>
        NASD5AE90
      </a>
      <div className="flex items-center gap-1.5 pt-1 pl-1">
        {TOP_TABS.map((t) => (
          <div
            key={t.label}
            className={`flex h-[34px] w-[158px] items-center rounded border border-[#4f6c7b] pr-2 pl-2.5 text-[12px] text-[#16232c] ${
              t.active ? "bg-[#a2dbf7] shadow-[inset_0_0_6px_2px_#dff2fb,inset_0_0_0_1px_#fff]" : "bg-linear-to-b from-[#b9e2f8] to-[#84bde0] shadow-[inset_0_0_4px_1px_#9ecfea]"
            }`}
          >
            {t.icon === "gear" ? (
              <svg aria-hidden="true" className="h-[22px] w-[22px]" viewBox="0 0 22 22">
                <rect x=".5" y=".5" width="21" height="21" rx="4" fill="#9b9b9b" stroke="#666" />
                <path d="M1 5a4 4 0 0 1 4-4h12a4 4 0 0 1 4 4v4Q11 13 1 15z" fill="#c9c9c9" />
                <circle cx="11" cy="11" r="4.600" fill="none" stroke="#4a4a4a" strokeWidth="1.800" />
                <circle cx="11" cy="11" r="6.500" fill="none" stroke="#4a4a4a" strokeWidth="1.800" strokeDasharray="2 3.100" />
                <circle cx="11" cy="11" r="1.500" fill="#4a4a4a" />
              </svg>
            ) : (
              <svg aria-hidden="true" className="h-[22px] w-[22px]" viewBox="0 0 22 22">
                <path d="M2 1h18v15H2z" fill="#3d434a" />
                <path d="M3 2h16v11H3z" fill="#0c1a28" />
                <path d="M3 8l4-1 3 2 3-3 6 2" fill="none" stroke="#22c3e6" strokeWidth="1.300" />
                <path d="M4 4h6v2H4z" fill="#27669e" />
                <path d="M2 14h18v3H2z" fill="#8c9298" />
                <path d="M8.500 17h5l1 2.500h2V21h-11v-1.500h2z" fill="#b8bdc2" />
              </svg>
            )}
            <span className="ml-2 flex-1">{t.label}</span>
            <button type="button" aria-label={`關閉 ${t.label}`}>
              <svg className="h-2 w-2" viewBox="0 0 8 8"><path d="M1 1l6 6M7 1L1 7" stroke="#3f607a" strokeWidth="2.400" /></svg>
            </button>
          </div>
        ))}
      </div>
      <div className="ml-auto flex items-center pr-3.5">
        <TopIcon label="myQNAPcloud" wide="mr-[15px]">
          <svg className="h-5 w-7" viewBox="0 0 28 20">
            <path d="M20 18.500H7A5.500 5.500 0 0 1 6.500 7.600 7.500 7.500 0 0 1 20.500 6.500 6 6 0 0 1 20.500 18.500C15 18.500 15 14 11 14.500A3.500 3.500 0 1 1 16.500 10" {...LINE} strokeWidth="2.200" />
          </svg>
        </TopIcon>
        <span className="mr-3.5 h-7 w-px bg-[#294f60]" />
        <TopIcon label="背景工作" wide="mr-[17px]">
          <svg className="h-[22px] w-[22px]" viewBox="0 0 22 22"><circle cx="11" cy="11" r="10" {...LINE} /><path d="M11 4v8M8.500 9.500l2.500 2.500 2.500-2.500" {...LINE} /></svg>
        </TopIcon>
        <TopIcon label="外接裝置" wide="mr-[17px]">
          <svg className="h-[22px] w-[22px]" viewBox="0 0 22 22">
            <path d="M1 12A10 10 0 0 1 18 4M21 10A10 10 0 0 1 4 18" {...LINE} />
            <path d="M21.500 2v5h-5zM.5 20v-5h5z" fill="#f4fbfe" />
            <rect x="8" y="5.500" width="6" height="11" rx="1" {...LINE} />
          </svg>
        </TopIcon>
        <div className="relative mr-7 h-[22px]">
          <TopIcon label="通知" wide="">
            <svg className="h-[22px] w-[22px]" viewBox="0 0 22 22">
              <circle cx="11" cy="11" r="10" {...LINE} />
              <path d="M9.500 4h3v3h-3zM8 9h4.500v6H14v2H8v-2h1.500v-4H8z" fill="#f4fbfe" />
            </svg>
          </TopIcon>
          <span className="absolute top-2.5 left-5 h-[15px] w-[15px] rounded-[3px] border border-white bg-[#f2602a] text-center text-[12px] leading-[13px] text-white">9</span>
        </div>
        <span className="mr-[17px] h-7 w-px bg-[#294f60]" />
        <button type="button" className="flex items-center font-['Noto_Sans'] text-[14px] font-medium text-white [text-shadow:0_1px_2px_rgba(0,0,0,0.6)]">
          <svg aria-hidden="true" className="mr-[25px] h-[26px] w-[26px]" viewBox="0 0 26 26">
            <path d="M.5.5h25v25H.5z" fill="#7fbac4" stroke="#fff" />
            <path d="M13 4c3 0 4 2 4 5 0 2-1 4-2 5v2c4 1.500 6 2 7 4.500V25H4v-4.500c1-2.500 3-3 7-4.500v-2c-1-1-2-3-2-5 0-3 1-5 4-5z" fill="#fff" />
          </svg>
          admin
          <svg aria-hidden="true" className="mr-[18px] ml-[11px] h-1.5 w-[7px]" viewBox="0 0 7 6"><path d="M0 0h7L3.500 6z" fill="#fff" /></svg>
        </button>
        <TopIcon label="搜尋" wide="mr-4">
          <svg className="h-4 w-4" viewBox="0 0 16 16"><circle cx="7" cy="7" r="5.500" {...LINE} strokeWidth="1.800" /><path d="M11 11l4 4.500" {...LINE} strokeWidth="2.500" /></svg>
        </TopIcon>
        <TopIcon label="說明" wide="mr-3.5">
          <svg className="h-[19px] w-4" viewBox="0 0 16 19">
            <rect x=".5" width="15" height="18.500" rx="1.500" fill="#fff" />
            <path d="M1 16h14" stroke="#7a8f99" />
            <path d="M5.500 5.500c0-3.300 5.300-3.300 5.300-.2C10.800 7.500 8.200 7.500 8.200 10M8.200 11.500v2" fill="none" stroke="#444" strokeWidth="2" />
          </svg>
        </TopIcon>
        <TopIcon label="語言" wide="mr-3">
          <svg className="h-5 w-5" viewBox="0 0 20 20">
            <circle cx="10" cy="10" r="9.500" fill="#fff" />
            <path d="M10 0v20M0 10h20M2 5.500h16M2 14.500h16" stroke="#7fb3c8" />
            <ellipse cx="10" cy="10" rx="5" ry="9.500" fill="none" stroke="#7fb3c8" />
          </svg>
        </TopIcon>
        <TopIcon label="桌面" wide="">
          <svg className="h-[17px] w-5" viewBox="0 0 20 17">
            <path d="M2 1.500h16v10H2z" {...LINE} strokeWidth="2.500" />
            <path d="M9 12h2v3h5v2H4v-2h5z" fill="#fff" />
          </svg>
        </TopIcon>
      </div>
    </header>
  );
}

function Gauge() {
  return (
    <svg className="h-[60px] w-[60px] shrink-0" viewBox="0 0 60 60">
      <defs>
        <radialGradient id="dial" cx=".5" cy=".5"><stop offset="0" stopColor="#c2741a" /><stop offset="1" stopColor="#fba819" /></radialGradient>
        <linearGradient id="rim" x1="0" y1="0" x2="0" y2="1"><stop offset="0" stopColor="#fff" /><stop offset="1" stopColor="#b5b5b5" /></linearGradient>
      </defs>
      <circle cx="30" cy="30" r="29.500" fill="url(#rim)" stroke="#888" strokeWidth=".5" />
      <circle cx="30" cy="30" r="26.500" fill="#28282a" />
      <path d="M8.600 43A25 25 0 1 1 51.400 43z" fill="url(#dial)" />
      <g fill="#f4e8da">
        <circle cx="12" cy="28" r="2.300" /><path d="M7 34c0-3 3-3 3-4h4c0 1 3 1 3 4z" />
        <circle cx="18.500" cy="17" r="3" fill="none" stroke="#f4e8da" strokeWidth="2.400" />
        <circle cx="18.500" cy="17" r="4.600" fill="none" stroke="#f4e8da" strokeWidth="1.500" strokeDasharray="1.800 1.800" />
        <path d="M28.500 8h3v6a3.300 3.300 0 1 1-3 0z" />
        <path d="M40 12.500h7v9h-7z" /><circle cx="43.500" cy="16" r="1.700" fill="#d38019" />
        <path d="M44 33c-1-3 1-4 2.500-3.500 1-2.500 4-1.500 4 .5 2.500 0 2.500 3 1 3z" />
      </g>
      <path d="M26 21l1.500 16h4z" fill="#d91e33" />
      <circle cx="30" cy="38" r="5.500" fill="#77716b" />
      <circle cx="29" cy="36.500" r="3" fill="#999" opacity=".7" />
    </svg>
  );
}

function DockIcon({ name }) {
  return (
    <svg aria-hidden="true" className="h-6 w-6 shrink-0" viewBox="0 0 24 24">
      {name === "phone" && (
        <g><rect x="4" width="16" height="24" rx="2" fill="#5f5b80" /><path d="M7 3h10v16H7z" fill="#dceefa" /><circle cx="12" cy="21.500" r="1.300" fill="#fff" /></g>
      )}
      {name === "hammer" && <path d="M1 10L9 2 14 1v2l-2 2.500 1 1L23 19l-4 4L9.500 10 7 9.500 4.500 13z" fill="#5f5b80" />}
      {name === "edit" && (
        <g>
          <path d="M15 3H5.500a3 3 0 0 0-3 3v13a3 3 0 0 0 3 3H18a3 3 0 0 0 3-3v-8" fill="none" stroke="#5f5b80" strokeWidth="2.400" />
          <path d="M8 16.500V13l8.500-8.500L20 8l-8.500 8.500zM17.500 3.500L20 1l3.500 3.500L21 7z" fill="#5f5b80" />
        </g>
      )}
    </svg>
  );
}

const DOCK = [
  ["phone", "QNAP 行動 App", "pl-3 gap-2"],
  ["hammer", "QNAP 應用工具", "pl-4 gap-2.5"],
  ["edit", "意見回饋", "pl-8 gap-3"],
];

export default function App() {
  return (
    <div className="relative h-screen overflow-hidden font-['DejaVu_Sans','Noto_Sans_CJK_TC',sans-serif]">
      <Wallpaper />

      <svg aria-hidden="true" className="absolute top-[87px] right-[305px] h-[84px] w-[84px] drop-shadow-md" viewBox="0 0 84 84">
        <defs><linearGradient id="app" x1="0" y1="0" x2="0" y2="1"><stop offset="0" stopColor="#f0607d" /><stop offset=".25" stopColor="#c22350" /><stop offset="1" stopColor="#850a3b" /></linearGradient></defs>
        <rect width="84" height="84" rx="18" fill="url(#app)" />
        <path d="M12 14h60v4H12zM12 21h56v50H12z" fill="#f5eef1" />
        <circle cx="50" cy="37" r="8" fill="#a41c4d" />
      </svg>

      <div className="absolute bottom-[5px] left-[30px] font-['Liberation_Sans','Noto_Sans_CJK_TC',sans-serif] text-white [text-shadow:1px_2px_3px_rgba(0,0,0,0.6)]">
        <div className="text-[70px] leading-[72px]">20:38</div>
        <div className="pl-2 text-[20px] leading-8 font-bold">星期三, 四月 22 日</div>
      </div>

      <StatusWindow />
      <ControlPanelWindow />
      <TopBar />

      <button type="button" aria-label="下一個桌面" className="absolute top-[368px] right-0 h-[86px] w-16">
        <svg className="h-full w-full" viewBox="0 0 64 86">
          <defs>
            <linearGradient id="fade"><stop offset="0" stopColor="#6695b3" stopOpacity=".7" /><stop offset="1" stopColor="#6695b3" stopOpacity="0" /></linearGradient>
            <linearGradient id="fadeFill"><stop offset="0" stopColor="#6fa5c6" stopOpacity=".3" /><stop offset="1" stopColor="#6fa5c6" stopOpacity="0" /></linearGradient>
          </defs>
          <path d="M43 .5A42.500 42.500 0 0 0 43 85.500" fill="url(#fadeFill)" stroke="url(#fade)" />
          <path d="M29.500 31l14 13-14 13" fill="none" stroke="#41708f" strokeWidth="5" strokeLinecap="round" opacity=".5" />
          <path d="M29.500 30l14 13-14 13" fill="none" stroke="#fff" strokeWidth="4.500" strokeLinecap="round" />
        </svg>
      </button>

      <button type="button" aria-label="資訊儀表板" className="absolute right-0 bottom-14 flex h-[88px] w-[68px] items-center rounded-l-xl border border-r-0 border-white/80 bg-linear-to-b from-[#bdd3f1] to-[#a8c5ea] pl-1 shadow-[0_0_5px_rgba(40,70,110,0.6)]">
        <Gauge />
      </button>

      <div className="absolute right-7 bottom-4 flex items-center gap-4 leading-9 text-[#e2edf4] [text-shadow:0_1px_3px_rgba(30,60,90,0.7)]">
        <span className="text-[28px] font-bold">QNAP</span>
        <span className="text-[22px] text-[#ccdbe6]">TS-251C</span>
      </div>

      <footer className="absolute inset-x-0 bottom-0 flex flex-col items-center">
        <div className="mb-8 flex items-center gap-6">
          <button type="button" aria-label="桌面 1" className="h-2 w-2 rounded-full border border-[#9eb2c0] bg-[#e3edf4]" />
          <button type="button" aria-label="桌面 2" className="h-2 w-2 rounded-full bg-black" />
          <button type="button" aria-label="桌面 3" className="h-2 w-2 rounded-full bg-black" />
        </div>
        <div className="flex gap-[3px]">
          {DOCK.map(([icon, label, pad]) => (
            <a key={label} href="#" className={`flex h-[30px] w-[164px] items-center rounded-t-md border border-b-0 border-[#87a8bd] bg-linear-to-b from-white/50 to-white/25 font-['Noto_Sans','Noto_Sans_CJK_TC',sans-serif] text-[12px] whitespace-nowrap text-black ${pad}`}>
              <DockIcon name={icon} />
              {label}
            </a>
          ))}
        </div>
      </footer>
    </div>
  );
}
